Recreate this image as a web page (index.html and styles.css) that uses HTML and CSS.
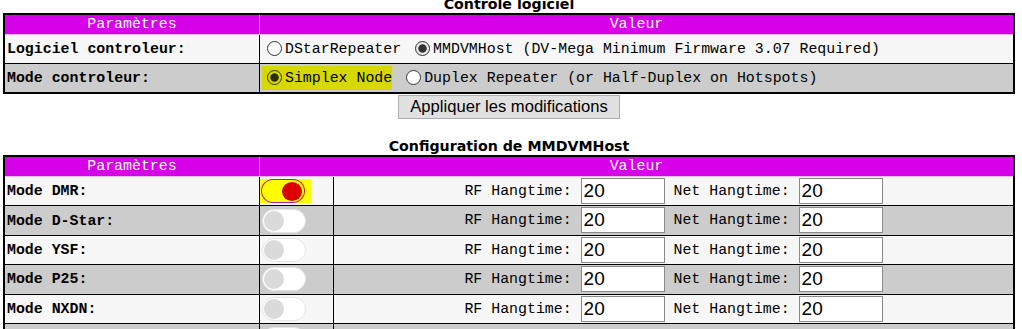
FILE: index.html
```html
<!DOCTYPE html>
<html lang="fr">
<head>
    <meta charset="UTF-8">
    <meta name="viewport" content="width=device-width, initial-scale=1.0">
    <title>Pi-Star - Configuration</title>
    <link rel="stylesheet" href="styles.css">
</head>
<body>

    <div class="page">
        <div class="section-title first">Controle logiciel</div>
        <table class="settings">
            <tr>
                <th class="col-param">Paramètres</th>
                <th>Valeur</th>
            </tr>
            <tr>
                <td class="label">Logiciel controleur:</td>
                <td class="value">
                    <input type="radio" name="controller" id="dstar"><label for="dstar">DStarRepeater</label>
                    <input type="radio" name="controller" id="mmdvm" checked><label for="mmdvm">MMDVMHost (DV-Mega Minimum Firmware 3.07 Required)</label>
                </td>
            </tr>
            <tr>
                <td class="label">Mode controleur:</td>
                <td class="value">
                    <span class="mark"><input type="radio" name="mode" id="simplex" checked><label for="simplex">Simplex Node</label></span>
                    <input type="radio" name="mode" id="duplex"><label for="duplex">Duplex Repeater (or Half-Duplex on Hotspots)</label>
                </td>
            </tr>
        </table>
        <div class="actions">
            <button type="button">Appliquer les modifications</button>
        </div>

        <div class="section-title second">Configuration de MMDVMHost</div>
        <table class="settings">
            <tr>
                <th class="col-param">Paramètres</th>
                <th colspan="2">Valeur</th>
            </tr>
            <tr>
                <td class="label">Mode DMR:</td>
                <td class="switch-cell"><span class="mark-switch"><span class="switch on"><span class="knob"></span></span></span></td>
                <td class="hang">RF Hangtime: <input type="text" value="20"> Net Hangtime: <input type="text" value="20"></td>
            </tr>
            <tr>
                <td class="label">Mode D-Star:</td>
                <td class="switch-cell"><span class="switch"><span class="knob"></span></span></td>
                <td class="hang">RF Hangtime: <input type="text" value="20"> Net Hangtime: <input type="text" value="20"></td>
            </tr>
            <tr>
                <td class="label">Mode YSF:</td>
                <td class="switch-cell"><span class="switch"><span class="knob"></span></span></td>
                <td class="hang">RF Hangtime: <input type="text" value="20"> Net Hangtime: <input type="text" value="20"></td>
            </tr>
            <tr>
                <td class="label">Mode P25:</td>
                <td class="switch-cell"><span class="switch"><span class="knob"></span></span></td>
                <td class="hang">RF Hangtime: <input type="text" value="20"> Net Hangtime: <input type="text" value="20"></td>
            </tr>
            <tr>
                <td class="label">Mode NXDN:</td>
                <td class="switch-cell"><span class="switch"><span class="knob"></span></span></td>
                <td class="hang">RF Hangtime: <input type="text" value="20"> Net Hangtime: <input type="text" value="20"></td>
            </tr>
            <tr class="tall">
                <td class="label">Mode YSF2DMR:</td>
                <td class="switch-cell"><span class="switch"><span class="knob"></span></span></td>
                <td class="hang"></td>
            </tr>
        </table>
    </div>

</body>
</html>
```

FILE: styles.css
```css
body {
    margin: 0;
    background-color: #fff;
    color: #000;
    font-family: "Liberation Mono", "Courier New", monospace;
    font-size: 14.9px;
}

.page {
    padding: 0 7px 0 3px;
}

.section-title {
    font-family: "DejaVu Sans", Tahoma, sans-serif;
    font-weight: bold;
    font-size: 14.2px;
    line-height: 17px;
    text-align: center;
}

.section-title.first {
    margin-top: -4px;
}

.section-title.second {
    margin-top: 19px;
}

.settings {
    width: 100%;
    border-collapse: collapse;
    border: 2px solid #000;
}

.settings th {
    background-color: #d600e9;
    color: #fff;
    font-weight: normal;
    line-height: 17px;
    padding: 1px 2px;
    border: 1px solid #eeb8f6;
}

.settings th.col-param {
    width: 250px;
}

.settings td {
    border: 1px solid #000;
    line-height: 18px;
    padding: 5px 2px;
    white-space: nowrap;
}

.settings tr:nth-child(even) {
    background-color: #f7f7f7;
}

.settings tr:nth-child(odd) {
    background-color: #cccccc;
}

.label {
    font-weight: bold;
    text-align: left;
}

.value {
    text-align: left;
}

.value input[type="radio"] {
    appearance: none;
    -webkit-appearance: none;
    width: 15px;
    height: 15px;
    margin: 0 3px 0 5px;
    border: 1px solid #333;
    border-radius: 50%;
    background: #fff;
    vertical-align: -3px;
}

.value input[type="radio"]:checked {
    background: radial-gradient(circle, #333 0 3.8px, #e8e8e8 4.6px);
}

/* yellow marker over the chosen mode */
.mark {
    display: inline-block;
    background-color: #d6d800;
    padding: 3px 0 3px 0;
    margin: -3px 0;
}

.mark input[type="radio"]:checked {
    background: radial-gradient(circle, #2b2b00 0 3.8px, #d6d800 4.6px);
}

.actions {
    display: flex;
    justify-content: center;
    padding-top: 1px;
}

button {
    height: 24px;
    padding: 0 11px;
    font-family: "Liberation Sans", Arial, sans-serif;
    font-size: 16.6px;
    color: #000;
    background-color: #e1e1e1;
    border: 1px solid #adadad;
    border-radius: 0;
}

.settings td.switch-cell {
    width: 73px;
    padding: 1px 0 1px 0;
}

.switch {
    display: inline-flex;
    align-items: center;
    box-sizing: border-box;
    width: 44px;
    height: 24px;
    margin-left: 2px;
    padding: 0 1px;
    border: 1px solid #e6e6e6;
    border-radius: 12px;
    background-color: #fff;
    vertical-align: middle;
}

.knob {
    width: 20px;
    height: 20px;
    border-radius: 50%;
    background-color: #dadada;
}

.switch.on {
    justify-content: flex-end;
    margin-left: 1px;
    padding: 0 2px;
    background-color: transparent;
    border-color: #c0203a #c0203a #b020c0;
}

.switch.on .knob {
    width: 20px;
    height: 19px;
    background-color: #dd0000;
}

.mark-switch {
    display: inline-block;
    background-color: #ffff00;
    padding: 0 6px 0 0;
    vertical-align: middle;
    line-height: 0;
}

.settings td.hang {
    text-align: center;
    padding: 1px 2px 1.4px;
}

.hang input {
    box-sizing: border-box;
    width: 84px;
    height: 26px;
    padding: 0 2px;
    border: 1px solid #8a8a8a;
    font-family: "Liberation Sans", Arial, sans-serif;
    font-size: 19px;
    color: #000;
    background-color: #fff;
    vertical-align: middle;
}

/* last row: switch sits at the top, label lower down */
.settings tr.tall td {
    vertical-align: top;
    height: 44px;
}

.settings tr.tall td.label {
    padding-top: 16px;
}

.settings tr.tall td.switch-cell {
    padding-top: 3px;
}
```
